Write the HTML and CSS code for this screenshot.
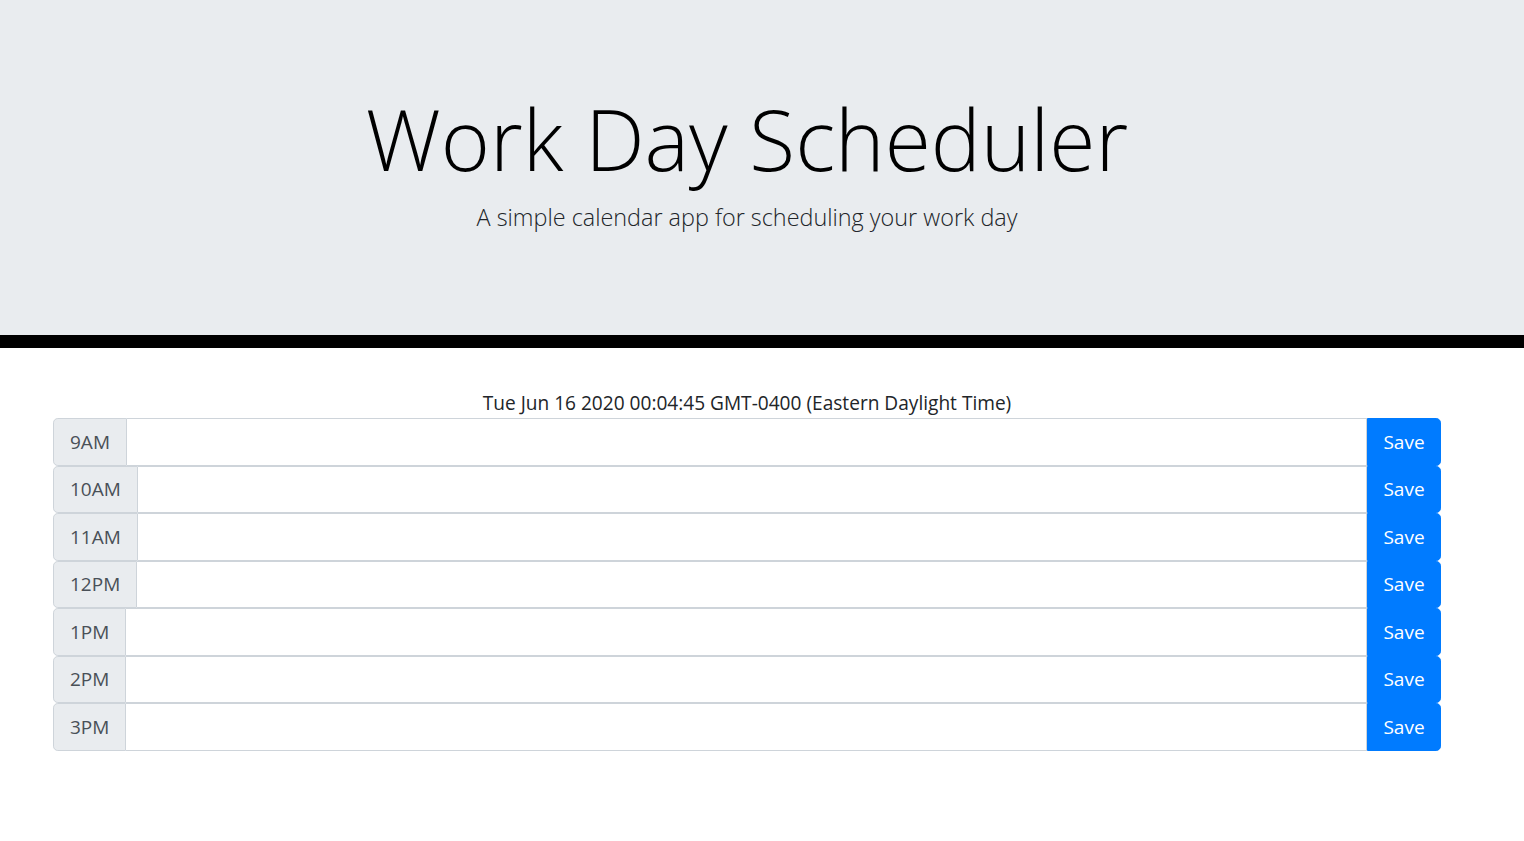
FILE: index.html
```html
<!DOCTYPE html>
<html lang="en">
<head>
<meta charset="utf-8">
<title>Work Day Scheduler</title>
<link rel="stylesheet" href="styles.css">
</head>
<body>
<header class="jumbotron">
  <div class="inner">
    <h1 class="display">Work Day Scheduler</h1>
    <p class="lead">A simple calendar app for scheduling your work day</p>
  </div>
</header>
<main class="page">
  <p class="current-day">Tue Jun 16 2020 00:04:45 GMT-0400 (Eastern Daylight Time)</p>
  <div class="hours">
    <div class="row"><span class="hour">9AM</span><textarea class="desc"></textarea><button class="save">Save</button></div>
    <div class="row"><span class="hour">10AM</span><textarea class="desc"></textarea><button class="save">Save</button></div>
    <div class="row"><span class="hour">11AM</span><textarea class="desc"></textarea><button class="save">Save</button></div>
    <div class="row"><span class="hour">12PM</span><textarea class="desc"></textarea><button class="save">Save</button></div>
    <div class="row"><span class="hour">1PM</span><textarea class="desc"></textarea><button class="save">Save</button></div>
    <div class="row"><span class="hour">2PM</span><textarea class="desc"></textarea><button class="save">Save</button></div>
    <div class="row"><span class="hour">3PM</span><textarea class="desc"></textarea><button class="save">Save</button></div>
  </div>
</main>
</body>
</html>
```
FILE: styles.css
```css
* { box-sizing: border-box; }
html, body { margin: 0; padding: 0; }
body {
  font-family: "Segoe UI", "Open Sans", "Noto Sans", sans-serif;
  color: #212529;
  background: #fff;
  width: 1524px;
}
.jumbotron {
  background: #e9ecef;
  border-bottom: 13px solid #000;
  height: 348px;
  padding-top: 89px;
}
.inner {
  width: 1494px;
  text-align: center;
}
.display {
  margin: 0;
  font-size: 84px;
  font-weight: 300;
  line-height: 1.2;
  color: #000;
}
.lead {
  margin: 10px 0 0;
  font-size: 23.4px;
  font-weight: 300;
  line-height: 1.5;
  color: #212529;
}
.page {
  width: 1494px;
  padding: 0 53px;
}
.current-day {
  margin: 41px 0 0;
  text-align: center;
  font-size: 19.1px;
  line-height: 29px;
}
.hours { display: flex; flex-direction: column; }
.row {
  display: flex;
  height: 47.5px;
}
.hour {
  display: flex;
  align-items: center;
  padding: 0 16px;
  font-size: 19px;
  color: #495057;
  background: #e9ecef;
  border: 1px solid #ced4da;
  border-radius: 4.8px 0 0 4.8px;
}
.desc {
  flex: 1;
  margin: 0;
  border: 1px solid #ced4da;
  border-left: 0;
  background: #fff;
  resize: none;
  font: inherit;
}
.save {
  width: 74px;
  margin: 0;
  border: 1px solid #007bff;
  background: #007bff;
  color: #fff;
  font-family: inherit;
  font-size: 19px;
  border-radius: 0 4.8px 4.8px 0;
  padding: 0;
}
```
